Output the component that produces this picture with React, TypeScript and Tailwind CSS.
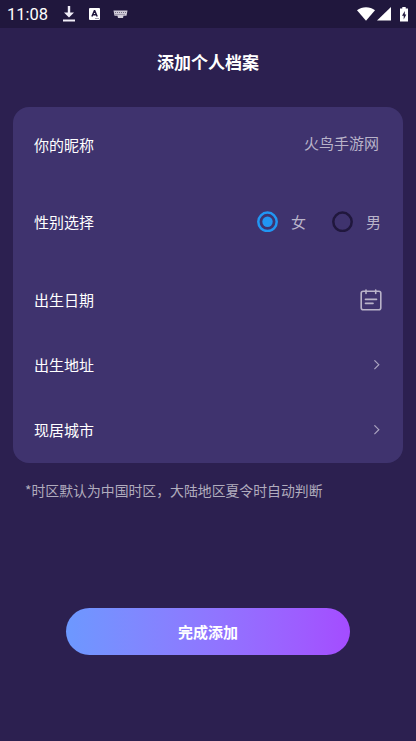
import { useState } from "react";

const StatusBar = () => (
  <div className="flex h-7 items-center justify-between bg-[#20173d] pl-[7px] pr-2 text-white">
    <div className="flex items-center">
      <span className="w-[54px] pt-px font-['Roboto','Noto_Sans_CJK_SC',sans-serif] text-[16.5px] leading-7">11:08</span>
      {/* Download */}
      <svg className="ml-0.5" width="12" height="16" viewBox="0 0 12 16" fill="#f1eef8">
        <path d="M4.800 0h2.400v6.500h3.800L6 11.600 1 6.500h3.800zM0 13.600h12v1.800H0z" />
      </svg>
      {/* Input language */}
      <svg className="ml-[14px]" width="11" height="12" viewBox="0 0 11 12">
        <rect width="11" height="12" rx="1" fill="#fff" />
        <path d="M2.900 8.500 5.400 2.700h.3l2.500 5.800M3.700 6.800h3.700" fill="none" stroke="#20173d" strokeWidth="1.500" />
        <path d="M6.500 10.500h1M8.500 10.500h1" stroke="#20173d" strokeWidth=".8" />
      </svg>
      {/* Keyboard */}
      <svg className="ml-[13px]" width="15" height="9" viewBox="0 0 15 9">
        <path d="M.5.5h14l-1 5.200h-3L10 8H5L4.500 5.700h-3z" fill="#d0ccd8" />
        <path d="M2 2.500h11M2.500 4.500h10" stroke="#5a526d" strokeWidth=".8" strokeDasharray="1 1" />
      </svg>
    </div>
    <div className="flex items-center">
      <svg width="18" height="14" viewBox="0 0 18 14" fill="#fff">
        <path d="M0 3.200C5-.9 13-.9 18 3.200L9 13.700z" />
      </svg>
      <svg className="ml-0.5" width="14" height="14" viewBox="0 0 14 14" fill="#fff">
        <path d="M14 0v13.500H0z" />
      </svg>
      <svg className="ml-[9px]" width="8" height="15" viewBox="0 0 8 15">
        <path d="M2.300 0h3.400v1.500H8V14.500H0V1.500h2.300z" fill="#fff" />
        <path d="M4.800 4 2 8.700h1.700V12.500L6.300 7.500H4.800z" fill="#20173d" />
      </svg>
    </div>
  </div>
);

const Radio = ({ checked }: { checked: boolean }) => (
  <svg width="21" height="21" viewBox="0 0 21 21">
    <circle cx="10.500" cy="10.800" r="9.200" fill="none" stroke={checked ? "#2196f3" : "#20173d"} strokeWidth="2.500" />
    {checked && <circle cx="10.500" cy="10.800" r="5.200" fill="#2196f3" />}
  </svg>
);

const CalendarIcon = () => (
  <svg width="22" height="22" viewBox="0 0 22 22" fill="none" stroke="#b9b3c9" strokeWidth="1.600" strokeLinecap="round">
    <rect x="1.200" y="2.200" width="19.600" height="18.600" rx="2" />
    <path d="M6 1v3.500M15.700 1v3.500" />
    <path d="M5.500 10.300h11M5.500 14.300h7.500" strokeWidth="1.700" />
  </svg>
);

const ArrowIcon = () => (
  <svg width="6" height="10" viewBox="0 0 6 10" fill="none" stroke="#aaa3bf" strokeWidth="1.200">
    <path d="M.4.300 4.800 4.700.4 9.100" />
  </svg>
);

const genders = ["女", "男"];

const App = () => {
  const [gender, setGender] = useState("女");

  return (
    <div className="flex h-[741px] w-[416px] flex-col bg-[#2c2050] font-['Noto_Sans_CJK_SC',sans-serif] text-white">
      <StatusBar />

      <h1 className="pt-[22px] text-center text-[17px] font-bold leading-6">添加个人档案</h1>

      <main className="mx-[13px] mt-[33px] h-[356px] rounded-2xl bg-[#3f336e] pl-[21px] text-[15px] leading-6">
        <div className="flex h-[76px] items-center justify-between pr-6">
          <span>你的昵称</span>
          <span className="pb-[5px] text-[#b9b3c9]">火鸟手游网</span>
        </div>

        <div className="flex h-[77px] items-center justify-between pr-[22px]">
          <span>性别选择</span>
          <div className="flex gap-[26px] text-[#b9b3c9]">
            {genders.map((item) => (
              <button key={item} className="flex items-center" onClick={() => setGender(item)}>
                <Radio checked={gender === item} />
                <span className="ml-[13px]">{item}</span>
              </button>
            ))}
          </div>
        </div>

        <div className="flex h-[72px] items-center justify-between pr-[21px] pt-2">
          <span>出生日期</span>
          <CalendarIcon />
        </div>

        <div className="flex h-[65px] items-center justify-between pr-[23px]">
          <span>出生地址</span>
          <ArrowIcon />
        </div>

        <div className="flex h-[65px] items-center justify-between pr-[23px]">
          <span>现居城市</span>
          <ArrowIcon />
        </div>
      </main>

      <p className="ml-[25px] mt-[15px] whitespace-nowrap text-[13.86px] leading-6 text-[#b1acbd]">
        *时区默认为中国时区，大陆地区夏令时自动判断
      </p>

      <button className="mx-auto mt-[106px] h-[47px] w-[284px] rounded-full bg-linear-to-r from-[#6c98ff] to-[#a44cff] pt-0.5 text-[15px] font-bold">
        完成添加
      </button>
    </div>
  );
};

export default App;
